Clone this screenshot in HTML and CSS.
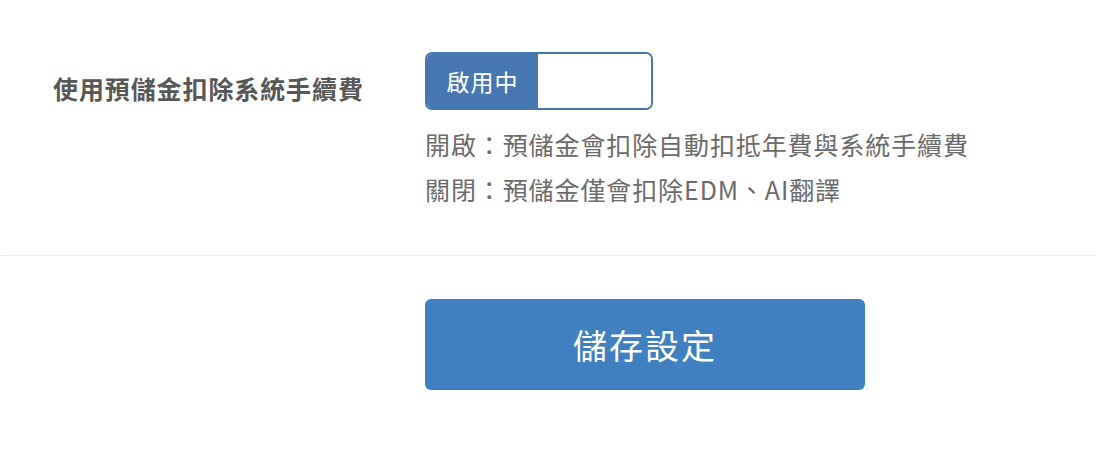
FILE: index.html
```html
<!DOCTYPE html>
<html lang="zh-Hant">
<head>
    <meta charset="UTF-8">
    <meta name="viewport" content="width=device-width, initial-scale=1.0">
    <title>預儲金設定</title>
    <link rel="stylesheet" href="styles.css">
</head>
<body>
    <!-- Setting row -->
    <div class="form-row">
        <div class="form-label">使用預儲金扣除系統手續費</div>
        <div class="form-control">
            <div class="toggle">
                <span class="toggle-on">啟用中</span>
                <span class="toggle-off"></span>
            </div>
            <div class="help-text">
                <div>開啟：預儲金會扣除自動扣抵年費與系統手續費</div>
                <div>關閉：預儲金僅會扣除EDM、AI翻譯</div>
            </div>
        </div>
    </div>

    <!-- Actions -->
    <div class="form-actions">
        <button class="save-btn">儲存設定</button>
    </div>
</body>
</html>
```

FILE: styles.css
```css
body {
    font-family: "Noto Sans CJK TC", "Noto Sans", sans-serif;
    margin: 0;
    background-color: #fff;
}
.form-row {
    display: grid;
    grid-template-columns: 372px 1fr;
    padding: 52px 0 43px 53px;
    border-bottom: 1px dotted #dcdcdc;
}
.form-label {
    font-size: 25px;
    letter-spacing: 0.9px;
    font-weight: bold;
    color: #575757;
    line-height: 58px;
    padding-top: 7px;
}
.toggle {
    display: flex;
    width: 228px;
    height: 58px;
    box-sizing: border-box;
    border: 2px solid #4777b0;
    border-radius: 7px;
    overflow: hidden;
}
.toggle-on {
    width: 111px;
    background-color: #4777b0;
    color: #fff;
    font-size: 23px;
    letter-spacing: 1px;
    line-height: 54px;
    text-align: center;
}
.toggle-off {
    flex: 1;
    background-color: #fff;
}
.help-text {
    margin-top: 12px;
    font-size: 25px;
    letter-spacing: 0.9px;
    line-height: 45px;
    color: #6b6b6b;
}
.form-actions {
    padding: 43px 0 0 425px;
}
.save-btn {
    width: 440px;
    height: 91px;
    border: none;
    border-radius: 6px;
    background-color: #4080c0;
    color: #fff;
    font-family: inherit;
    font-size: 34px;
    letter-spacing: 2px;
    cursor: pointer;
}
```
